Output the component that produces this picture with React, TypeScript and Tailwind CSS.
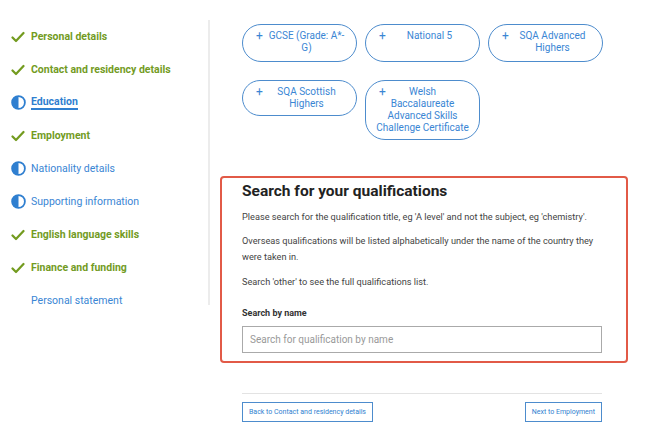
import React from "react";

const GREEN = "#739b1f";

function Check() {
  return (
    <svg width="14" height="12" viewBox="0 0 14 12" className="shrink-0">
      <path d="M1.5 6.5 L5 10 L12.5 2" fill="none" stroke={GREEN} strokeWidth="2.2" strokeLinecap="round" strokeLinejoin="round" />
    </svg>
  );
}

function Half() {
  return (
    <svg width="15" height="15" viewBox="0 0 15 15" className="shrink-0">
      <circle cx="7.5" cy="7.5" r="6.4" fill="#fff" stroke="#2f7fd0" strokeWidth="1.8" />
      <path d="M7.5 1.1 A6.4 6.4 0 0 0 7.5 13.9 Z" fill="#2f7fd0" />
    </svg>
  );
}

type Item = { label: string; kind: "done" | "half" | "current" | "none" };
const items: Item[] = [
  { label: "Personal details", kind: "done" },
  { label: "Contact and residency details", kind: "done" },
  { label: "Education", kind: "current" },
  { label: "Employment", kind: "done" },
  { label: "Nationality details", kind: "half" },
  { label: "Supporting information", kind: "half" },
  { label: "English language skills", kind: "done" },
  { label: "Finance and funding", kind: "done" },
  { label: "Personal statement", kind: "none" },
];

const pills: { lines: string[]; cls: string }[] = [
  { lines: ["GCSE (Grade: A*-", "G)"], cls: "pl-[24px] pr-[10px]" },
  { lines: ["National 5"], cls: "pl-[24px] pr-[10px]" },
  { lines: ["SQA Advanced", "Highers"], cls: "pl-[24px] pr-[10px]" },
  { lines: ["SQA Scottish", "Highers"], cls: "pl-[24px] pr-[10px]" },
  { lines: ["Welsh", "Baccalaureate", "Advanced Skills", "Challenge Certificate"], cls: "pl-[14px] pr-[14px]" },
];

export default function App() {
  return (
    <div
      className="w-[654px] h-[435px] bg-white flex overflow-hidden"
      style={{ fontFamily: "Roboto, 'Liberation Sans', sans-serif" }}
    >
      {/* Sidebar */}
      <div className="w-[210px] shrink-0">
        <div className="mt-[25px] h-[285px] border-r-2 border-[#ececec]">
          <ul className="-mt-[5px]">
            {items.map((it) => (
              <li key={it.label} className="h-[33px] flex items-center pl-[11px]">
                <div className="w-[20px] flex items-center">
                  {it.kind === "done" && <Check />}
                  {(it.kind === "half" || it.kind === "current") && <Half />}
                </div>
                <span
                  className={
                    it.kind === "done"
                      ? "text-[10.5px] font-bold text-[#739b1f]"
                      : it.kind === "current"
                      ? "text-[10.5px] font-bold text-[#2f7fd0] border-b-2 border-[#2f7fd0] leading-[13px]"
                      : "text-[10.5px] text-[#3a86d4]"
                  }
                >
                  {it.label}
                </span>
              </li>
            ))}
          </ul>
        </div>
      </div>

      {/* Main */}
      <div className="ml-[32px] w-[360px] shrink-0">
        <div className="mt-[24px] grid grid-cols-[115px_115px_115px] gap-x-[8px] gap-y-[18px] items-start">
          {pills.map((p, i) => (
            <div
              key={i}
              className={`relative border-[1.5px] border-[#4d8ccd] rounded-[20px] py-[5px] text-[#3a86d4] text-[10px] leading-[12px] flex flex-col items-center ${p.cls} ${i < 3 ? "h-[38px]" : ""}`}
            >
              <span className="absolute left-[13px] top-[4px] text-[12px] leading-[14px]">+</span>
              {p.lines.map((l) => (
                <span key={l} className="whitespace-nowrap">{l}</span>
              ))}
            </div>
          ))}
        </div>

        {/* Highlighted search box */}
        <div className="mt-[36px] -ml-[22px] w-[408px] border-2 border-[#e25a47] rounded-[4px] pl-[20px] pr-[24px] pt-[3px] pb-[8px]">
          <h2 className="text-[15.5px] leading-[20px] font-bold text-[#222]">Search for your qualifications</h2>
          <p className="mt-[8px] text-[9.2px] leading-[16px] text-[#444]">
            Please search for the qualification title, eg 'A level' and not the subject, eg 'chemistry'.
          </p>
          <p className="mt-[8px] text-[9.2px] leading-[16px] text-[#444]">
            Overseas qualifications will be listed alphabetically under the name of the country they were taken in.
          </p>
          <p className="mt-[9px] text-[9.2px] leading-[16px] text-[#444]">
            Search 'other' to see the full qualifications list.
          </p>
          <div className="mt-[15px] text-[9px] leading-[16px] font-bold text-[#333]">Search by name</div>
          <div className="mt-[5px] h-[27px] border border-[#aaaaaa] flex items-center px-[7px] text-[10px] text-[#999]">
            Search for qualification by name
          </div>
        </div>

        <div className="mt-[30px] h-px bg-[#e3e3e3]" />
        <div className="mt-[8px] flex justify-between">
          <button className="h-[20px] px-[6px] border-[1.5px] border-[#4d8ccd] text-[7px] text-[#2f7fd0]">
            Back to Contact and residency details
          </button>
          <button className="h-[20px] px-[6px] border-[1.5px] border-[#4d8ccd] text-[7px] text-[#2f7fd0]">
            Next to Employment
          </button>
        </div>
      </div>
    </div>
  );
}
